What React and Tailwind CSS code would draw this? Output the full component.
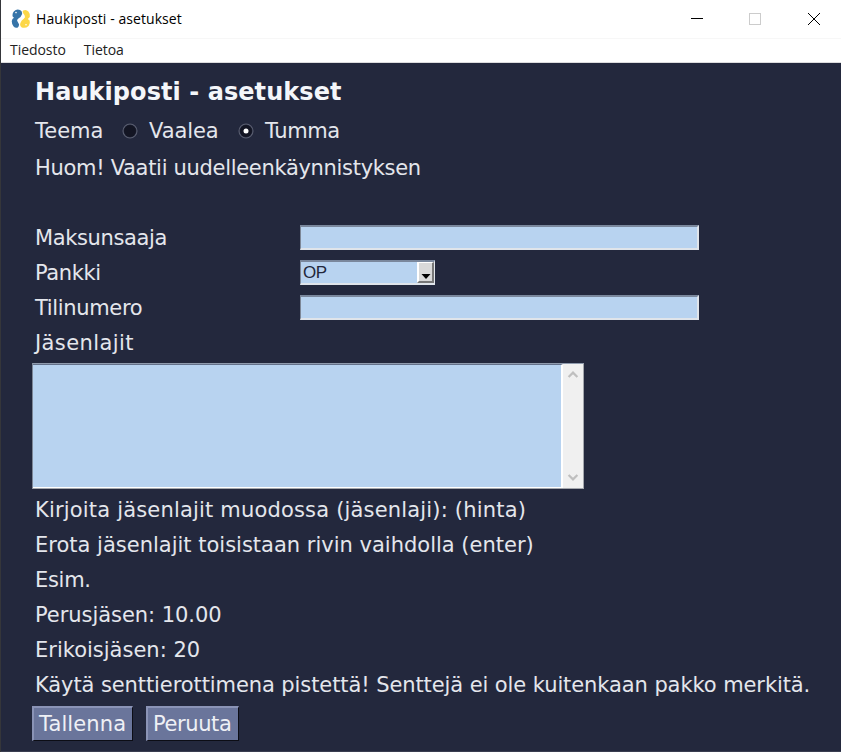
const labelFont = "font-['DejaVu_Sans',sans-serif] text-[21px] leading-[35px] whitespace-pre text-[#e4e6ec]";
const fieldLabel = "pt-[2px] font-['DejaVu_Sans',sans-serif] text-[21px] leading-[33px] whitespace-pre text-[#e4e6ec]";

function PythonLogo() {
  return (
    <svg width="20" height="20" viewBox="0 0 20 20" className="shrink-0">
      <path d="M3 2.2Q5.6 -.4 9 1Q11.6 2.4 11 5.2Q10.2 8 7.4 9.4Q5.2 10.8 6.8 13L8 15.2Q8.2 17.2 6.8 18.4Q4.4 19.4 2.4 17.2Q.6 14.8 .8 12Q1 9.8 3 8.8L1.8 7.8Q.8 4.6 3 2.2Z" fill="#3674a8" />
      <path d="M12.2 1.4Q15.2 0 17.4 2.4Q19.6 5 18.8 8L16.8 10L18.6 11.4Q19.6 14.4 17.6 17Q14.4 19.8 10.8 18.4Q8.4 16.6 9.4 13.9Q10.4 11 12.8 9.8Q14.8 8.4 13.6 6.2Q11.8 4.2 11.6 2.8Z" fill="#fcd748" />
      <circle cx="5" cy="3.6" r=".8" fill="#fff" />
      <circle cx="15" cy="15.8" r=".8" fill="#fff" />
    </svg>
  );
}

function Radio({ checked }) {
  return (
    <svg width="16" height="16" viewBox="0 0 16 16" className="shrink-0">
      <circle cx="8" cy="8" r="7" fill="#23283d" stroke="#5a5e70" strokeWidth="1.1" />
      <circle cx="8" cy="8" r="6" fill="#131523" />
      {checked && <circle cx="8" cy="8" r="2.5" fill="#fff" />}
    </svg>
  );
}

function Entry() {
  return <div className="h-[25px] w-[399px] border-t-2 border-l border-b-2 border-r-2 border-t-[#7a879c] border-l-[#7d8797] border-b-[#dfe4ea] border-r-[#dfe4ea] bg-[#b8d3f0]" />;
}

function Button({ children, className }) {
  return (
    <div className={`h-[35px] border-t-2 border-l-2 border-r border-b border-t-[#8a93b6] border-l-[#8a93b6] border-r-[#0c0d15] border-b-[#0c0d15] bg-[#6a759b] leading-[33px] font-['DejaVu_Sans',sans-serif] text-[21px] whitespace-nowrap text-[#eef0f5] ${className}`}>
      {children}
    </div>
  );
}

function Chevron({ down }) {
  return (
    <svg width="12" height="9" viewBox="0 0 12 9" className={down ? "rotate-180" : ""}>
      <path d="M1.6 7L6 2.6L10.4 7" fill="none" stroke="#bfbfbf" strokeWidth="2.2" />
    </svg>
  );
}

export default function App() {
  return (
    <div className="flex h-[752px] w-[841px] flex-col overflow-hidden border-l border-[#35363a] bg-[#23283d]">
      <header className="flex h-[38px] shrink-0 items-center bg-white pl-[10px] font-['Open_Sans',sans-serif]">
        <PythonLogo />
        <span className="ml-[5px] text-[14px] leading-5 tracking-[0.07px] whitespace-nowrap text-black">Haukiposti - asetukset</span>
        <svg width="130" height="14" viewBox="0 0 130 14" className="mr-[21px] ml-auto" shapeRendering="crispEdges">
          <path d="M1 6.5H13" stroke="#000" />
          <path d="M59.5 1.5H70.5V12.5H59.5Z" fill="none" stroke="#ccc" />
          <path d="M118 1L130 13M130 1L118 13" stroke="#000" shapeRendering="auto" />
        </svg>
      </header>
      <nav className="flex h-[25px] shrink-0 items-center gap-[18px] border-t border-b border-t-[#f7f7f7] border-b-[#dcdcde] bg-white pb-[2px] pl-[9px] font-['Open_Sans',sans-serif] text-[14px] tracking-[-0.05px] text-[#222]">
        <span>Tiedosto</span>
        <span>Tietoa</span>
      </nav>
      <main className="flex flex-1 flex-col border-b border-[#3a3e50] pl-[31px]">
        <h1 className="mt-[10px] ml-[3px] h-[38px] font-['DejaVu_Sans',sans-serif] text-[24px] leading-[38px] font-bold tracking-[0.06px] text-[#f4f6fa]">Haukiposti - asetukset</h1>
        <div className="ml-[3px] flex h-[39px] items-center">
          <span className={`w-[87px] ${fieldLabel}`}>Teema</span>
          <Radio />
          <span className={`ml-[11px] w-[89px] tracking-[-0.1px] ${fieldLabel}`}>Vaalea</span>
          <Radio checked />
          <span className={`ml-[11px] tracking-[-0.4px] ${fieldLabel}`}>Tumma</span>
        </div>
        <p className={`mt-px ml-[3px] tracking-[-0.31px] ${labelFont}`}>Huom! Vaatii uudelleenkäynnistyksen</p>
        <div className="mt-[34px] ml-[3px] grid grid-cols-[265px_1fr] items-center">
          <span className={`tracking-[-0.38px] ${fieldLabel}`}>Maksunsaaja</span>
          <Entry />
          <span className={`tracking-[-0.4px] ${fieldLabel}`}>Pankki</span>
          <div className="flex h-[25px] w-[135px] items-stretch border-t-2 border-l border-b-2 border-r border-t-[#7a879c] border-l-[#7d8797] border-b-[#dfe4ea] border-r-[#e3e7ec] bg-[#b8d3f0]">
            <span className="flex-1 pl-[2px] font-['Liberation_Sans',sans-serif] text-[17px] leading-[22px] tracking-[-0.5px] text-[#22273b]">OP</span>
            <span className="flex w-[17px] items-end justify-center border-t border-l-2 border-r-2 border-b-2 border-t-white border-l-white border-r-[#777] border-b-[#777] bg-[#d9d9d9] pb-[2px]">
              <svg width="10" height="5" viewBox="0 0 10 5"><path d="M.5 0H9.5L5 5Z" fill="#000" /></svg>
            </span>
          </div>
          <span className={`tracking-[-0.35px] ${fieldLabel}`}>Tilinumero</span>
          <Entry />
          <span className={`tracking-[0.4px] ${fieldLabel}`}>Jäsenlajit</span>
        </div>
        <div className="mt-[3px] flex h-[126px] w-[552px] border border-t-[#8f9bae] border-l-[#7d8797] border-b-[#a4a7ad] border-r-[#a4a7ad] bg-[#b8d3f0]">
          <div className="flex-1 border-t border-r-2 border-b border-t-[#64718a] border-r-white border-b-white" />
          <div className="flex w-[20px] flex-col items-center justify-between bg-[#f0f0f0] py-[6px]">
            <Chevron />
            <Chevron down />
          </div>
        </div>
        <div className={`mt-[4px] ml-[3px] flex flex-col ${labelFont}`}>
          <span className="tracking-[0.18px]">Kirjoita jäsenlajit muodossa (jäsenlaji): (hinta)</span>
          <span>Erota jäsenlajit toisistaan rivin vaihdolla (enter)</span>
          <span className="tracking-[-0.3px]">Esim.</span>
          <span className="tracking-[-0.05px]">Perusjäsen: 10.00</span>
          <span>Erikoisjäsen: 20</span>
          <span className="tracking-[-0.09px]">Käytä senttierottimena pistettä! Senttejä ei ole kuitenkaan pakko merkitä.</span>
        </div>
        <div className="mt-[3px] flex gap-[13px]">
          <Button className="w-[101px] pl-[5px] tracking-[0.1px]">Tallenna</Button>
          <Button className="w-[93px] pl-[5px] tracking-[-0.4px]">Peruuta</Button>
        </div>
      </main>
    </div>
  );
}
